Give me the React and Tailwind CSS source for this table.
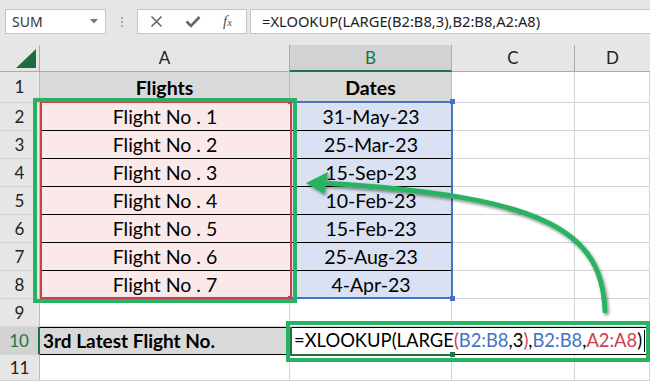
const ROWS = [
  { n: 2, a: 'Flight No . 1', b: '31-May-23' },
  { n: 3, a: 'Flight No . 2', b: '25-Mar-23' },
  { n: 4, a: 'Flight No . 3', b: '15-Sep-23' },
  { n: 5, a: 'Flight No . 4', b: '10-Feb-23' },
  { n: 6, a: 'Flight No . 5', b: '15-Feb-23' },
  { n: 7, a: 'Flight No . 6', b: '25-Aug-23' },
  { n: 8, a: 'Flight No . 7', b: '4-Apr-23' },
];

function RowHead({ n, active }) {
  return (
    <div
      className={`flex items-center justify-center text-[17px] border-b border-[#d4d4d4] ${
        active ? 'bg-[#d2d2d2] text-[#217346] border-r-2 border-r-[#217346]' : 'bg-[#e6e6e6] text-[#222] border-r border-r-[#bcbcbc]'
      }`}
    >
      {n}
    </div>
  );
}

function Blank() {
  return <div className="border-r border-b border-[#d4d4d4] bg-white" />;
}

export default function App() {
  return (
    <div className="relative w-[650px] h-[381px] overflow-hidden bg-white font-['Lato',sans-serif] text-black">
      {/* formula bar */}
      <div className="h-[45px] bg-[#e6e6e6] flex items-start pt-[9px] pl-[5px]">
        <div className="w-[101px] h-[25px] bg-white border border-[#c6c6c6] flex items-center justify-between pl-[6px] pr-[7px]">
          <span className="font-['Noto_Sans',sans-serif] text-[14px] text-[#333]">SUM</span>
          <svg width="8" height="5" viewBox="0 0 8 5"><path d="M0 0h8L4 4.5z" fill="#777" /></svg>
        </div>
        <div className="w-[31px] h-[25px] flex flex-col items-center justify-center gap-[2px]">
          <span className="w-[2px] h-[2px] bg-[#aaa]" />
          <span className="w-[2px] h-[2px] bg-[#aaa]" />
          <span className="w-[2px] h-[2px] bg-[#aaa]" />
        </div>
        <div className="w-[110px] h-[25px] bg-white border border-[#c6c6c6] flex items-center pl-[12px] gap-[22px]">
          <svg width="13" height="13" viewBox="0 0 13 13"><path d="M1.5 1.5l10 10M11.5 1.5l-10 10" stroke="#666" strokeWidth="1.6" /></svg>
          <svg width="16" height="13" viewBox="0 0 16 13"><path d="M1.5 6.5l4.5 4.5L14.5 2" stroke="#666" strokeWidth="2.6" fill="none" /></svg>
          <span className="font-['Liberation_Serif',serif] italic text-[15px] text-[#555] leading-none">f<span className="text-[11px]">x</span></span>
        </div>
        <div className="ml-[3px] flex-1 h-[25px] bg-white border border-[#c6c6c6] border-r-0 flex items-center pl-[11px] font-['Noto_Sans',sans-serif] text-[14.7px] text-[#222]">
          =XLOOKUP(LARGE(B2:B8,3),B2:B8,A2:A8)
        </div>
      </div>

      {/* sheet grid */}
      <div className="grid grid-cols-[40px_250px_162px_123px_75px] grid-rows-[27px_31px_repeat(9,28px)_26px]">
        <div className="bg-[#e6e6e6] border-r border-b border-[#ababab] relative">
          <svg className="absolute left-[16px] top-[4px]" width="20" height="20" viewBox="0 0 20 20"><path d="M20 0V19H0z" fill="#1f6b43" /></svg>
        </div>
        <div className="bg-[#e6e6e6] border-r border-b border-[#ababab] flex items-center justify-center text-[17px] text-[#222]">A</div>
        <div className="bg-[#d2d2d2] border-r border-[#ababab] border-b-2 border-b-[#217346] flex items-center justify-center text-[17px] text-[#217346]">B</div>
        <div className="bg-[#e6e6e6] border-r border-b border-[#ababab] flex items-center justify-center text-[17px] text-[#222]">C</div>
        <div className="bg-[#e6e6e6] border-b border-[#ababab] flex items-center justify-center text-[17px] text-[#222]">D</div>

        <RowHead n={1} />
        <div className="bg-[#d9d9d9] border-r border-[#bcbcbc] flex items-center justify-center font-bold text-[19.5px]">Flights</div>
        <div className="bg-[#d9d9d9] border-r border-[#bcbcbc] flex items-center justify-center font-bold text-[19.5px]">Dates</div>
        <Blank />
        <Blank />

        {ROWS.map((r) => (
          <div key={r.n} className="contents">
            <RowHead n={r.n} />
            <div className="bg-[#fbe9e9] border-b border-black flex items-center justify-center text-[19.5px]">{r.a}</div>
            <div className="bg-[#d9e1f2] border-b border-black flex items-center justify-center text-[19.5px]">{r.b}</div>
            <Blank />
            <Blank />
          </div>
        ))}

        <RowHead n={9} />
        <Blank />
        <Blank />
        <Blank />
        <Blank />

        <RowHead n={10} active />
        <div className="bg-[#d9d9d9] border-y border-black flex items-center pl-[3px] font-bold text-[19px]">3rd Latest Flight No.</div>
        <div className="col-span-3 bg-white border-y border-black flex items-center pl-[4px] text-[18.4px] whitespace-nowrap">
          =XLOOKUP(LARGE<span className="text-[#c8424e]">(</span>
          <span className="text-[#4472c4]">B2:B8</span>,3<span className="text-[#c8424e]">)</span>,
          <span className="text-[#4472c4]">B2:B8</span>,
          <span className="text-[#c8424e]">A2:A8</span>)
          <span className="inline-block w-[1px] h-[22px] bg-black ml-[2px]" />
        </div>

        <RowHead n={11} />
        <Blank />
        <Blank />
        <Blank />
        <Blank />
      </div>

      {/* active cell border of B10 */}
      <div className="absolute left-[290px] top-[327px] w-[2px] h-[29px] bg-[#217346]" />
      <div className="absolute left-[290px] top-[354px] w-[162px] h-[2px] bg-[#217346]" />
      <div className="absolute left-[450px] top-[352px] w-[5px] h-[5px] bg-[#217346]" />

      {/* reference outlines */}
      <div className="absolute left-[40px] top-[101px] w-[252px] h-[198px] border-2 border-[#c8424e]" />
      <div className="absolute left-[288px] top-[100px] w-[4px] h-[4px] bg-[#c8424e]" />
      <div className="absolute left-[288px] top-[296px] w-[4px] h-[4px] bg-[#c8424e]" />
      <div className="absolute left-[292px] top-[101px] w-[161px] h-[198px] border-2 border-l-0 border-[#4472c4]" />
      <div className="absolute left-[450px] top-[99px] w-[5px] h-[5px] bg-[#4472c4]" />
      <div className="absolute left-[450px] top-[296px] w-[5px] h-[5px] bg-[#4472c4]" />

      {/* annotations */}
      <div className="absolute left-[33px] top-[98px] w-[264px] h-[205px] border-4 border-[#2ab263]" />
      <div className="absolute left-[286px] top-[321px] w-[364px] h-[41px] border-4 border-[#2ab263]" />
      <svg className="absolute left-0 top-0 pointer-events-none" width="650" height="381" viewBox="0 0 650 381">
        <defs>
          <filter id="sh" x="-10%" y="-10%" width="130%" height="130%">
            <feDropShadow dx="1.5" dy="2" stdDeviation="1.5" floodColor="#000" floodOpacity="0.45" />
          </filter>
        </defs>
        <g filter="url(#sh)">
          <path d="M605 311C602 232 548 196 322 183" stroke="#2ab263" strokeWidth="5" fill="none" strokeLinecap="round" />
          <path d="M306 183L328 172L324 194Z" fill="#2ab263" />
        </g>
      </svg>
    </div>
  );
}
